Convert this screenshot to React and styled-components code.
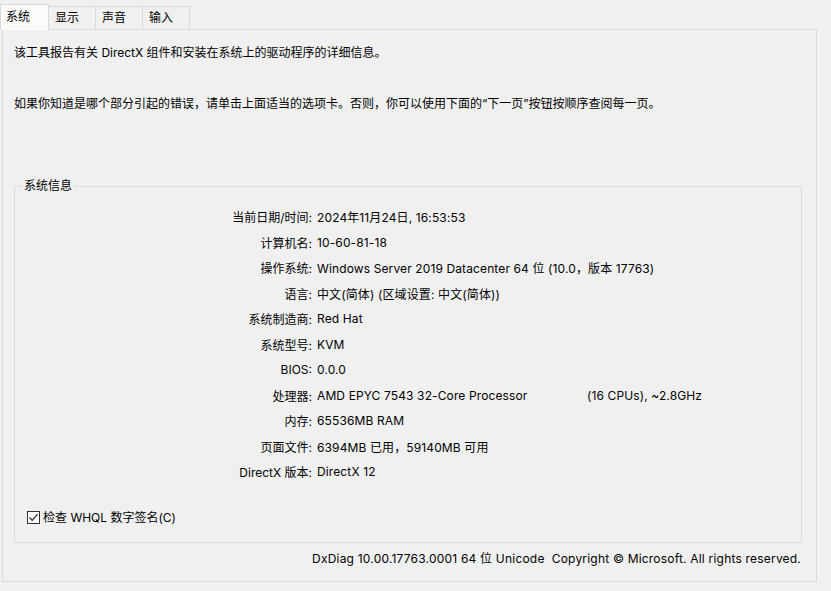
import React from 'react';
import styled, { createGlobalStyle } from 'styled-components';

const GlobalStyle = createGlobalStyle`
  html, body {
    margin: 0;
    padding: 0;
    background: #f0f0f0;
  }
  body {
    font-family: "Inter", "Noto Sans CJK SC", sans-serif;
    font-size: 12px;
    color: #000;
  }
`;

const Window = styled.div`
  width: 831px;
  height: 591px;
  background: #f0f0f0;
  overflow: hidden;
`;

const TabBar = styled.div`
  display: flex;
  align-items: flex-end;
  height: 29px;
`;

const Tab = styled.div`
  box-sizing: border-box;
  width: ${(p) => p.width}px;
  height: ${(p) => (p.active ? 26 : 23)}px;
  padding-left: ${(p) => (p.active ? 5 : 6)}px;
  line-height: ${(p) => (p.active ? 23 : 21)}px;
  border: 1px solid #d9d9d9;
  border-bottom: none;
  border-left: ${(p) => (p.first || p.active ? '1px solid #d9d9d9' : 'none')};
  background: ${(p) => (p.active ? '#fbfbfb' : '#f0f0f0')};
  margin-bottom: ${(p) => (p.active ? '-1px' : '0')};
  position: relative;
  z-index: ${(p) => (p.active ? 2 : 1)};
  white-space: nowrap;
`;

const Panel = styled.div`
  box-sizing: border-box;
  width: 815px;
  height: 553px;
  margin-left: 2px;
  border: 1px solid #d9d9d9;
  padding: 15px 15px 0 11px;
  display: flex;
  flex-direction: column;
`;

const Intro = styled.p`
  margin: 0 0 ${(p) => p.gap}px 0;
  line-height: 16px;
  white-space: nowrap;
`;

const GroupBox = styled.fieldset`
  margin: 0 -1px 0 0;
  padding: 10px 0 16px 0;
  border: 1px solid #dcdcdc;
  min-width: 0;
`;

const Legend = styled.legend`
  margin-left: 7px;
  padding: 0 2px;
  line-height: 16px;
`;

const InfoGrid = styled.div`
  display: grid;
  grid-template-columns: 297px 1fr;
  column-gap: 5px;
  grid-auto-rows: 25.5px;
  align-items: center;
`;

const Label = styled.div`
  text-align: right;
  white-space: nowrap;
`;

const Value = styled.div`
  white-space: nowrap;
  letter-spacing: 0.12px;
`;

const Cpu = styled.span`
  display: inline-block;
  width: 270px;
`;

const CheckRow = styled.label`
  display: flex;
  align-items: center;
  gap: 3px;
  margin: 25px 0 0 12px;
  line-height: 16px;
`;

const CheckBox = styled.span`
  box-sizing: border-box;
  width: 13px;
  height: 13px;
  border: 1px solid #333;
  background: #fff;
  display: flex;
  align-items: center;
  justify-content: center;
`;

const Footer = styled.div`
  margin-top: 8px;
  text-align: right;
  line-height: 16px;
  white-space: nowrap;
  letter-spacing: 0.2px;
`;

const tabs = [
  { name: '系统', width: 49 },
  { name: '显示', width: 47 },
  { name: '声音', width: 47 },
  { name: '输入', width: 47 },
];

const rows = [
  ['当前日期/时间:', '2024年11月24日, 16:53:53'],
  ['计算机名:', '10-60-81-18'],
  ['操作系统:', 'Windows Server 2019 Datacenter 64 位 (10.0，版本 17763)'],
  ['语言:', '中文(简体) (区域设置: 中文(简体))'],
  ['系统制造商:', 'Red Hat'],
  ['系统型号:', 'KVM'],
  ['BIOS:', '0.0.0'],
  ['处理器:', 'cpu'],
  ['内存:', '65536MB RAM'],
  ['页面文件:', '6394MB 已用，59140MB 可用'],
  ['DirectX 版本:', 'DirectX 12'],
];

export default function App() {
  return (
    <Window>
      <GlobalStyle />
      <TabBar>
        {tabs.map((t, i) => (
          <Tab key={t.name} width={t.width} active={i === 0} first={i === 0}>
            {t.name}
          </Tab>
        ))}
      </TabBar>
      <Panel>
        <Intro gap={35}>该工具报告有关 DirectX 组件和安装在系统上的驱动程序的详细信息。</Intro>
        <Intro gap={66}>
          如果你知道是哪个部分引起的错误，请单击上面适当的选项卡。否则，你可以使用下面的“下一页”按钮按顺序查阅每一页。
        </Intro>
        <GroupBox>
          <Legend>系统信息</Legend>
          <InfoGrid>
            {rows.map(([label, value]) => (
              <React.Fragment key={label}>
                <Label>{label}</Label>
                <Value>
                  {value === 'cpu' ? (
                    <>
                      <Cpu>AMD EPYC 7543 32-Core Processor</Cpu>(16 CPUs), ~2.8GHz
                    </>
                  ) : (
                    value
                  )}
                </Value>
              </React.Fragment>
            ))}
          </InfoGrid>
          <CheckRow>
            <CheckBox>
              <svg width="11" height="11" viewBox="0 0 11 11">
                <path d="M1.5 5.5 L4.2 8.3 L9.5 2.2" fill="none" stroke="#222" strokeWidth="1.2" />
              </svg>
            </CheckBox>
            检查 WHQL 数字签名(C)
          </CheckRow>
        </GroupBox>
        <Footer>DxDiag 10.00.17763.0001 64 位 Unicode&nbsp; Copyright © Microsoft. All rights reserved.</Footer>
      </Panel>
    </Window>
  );
}
